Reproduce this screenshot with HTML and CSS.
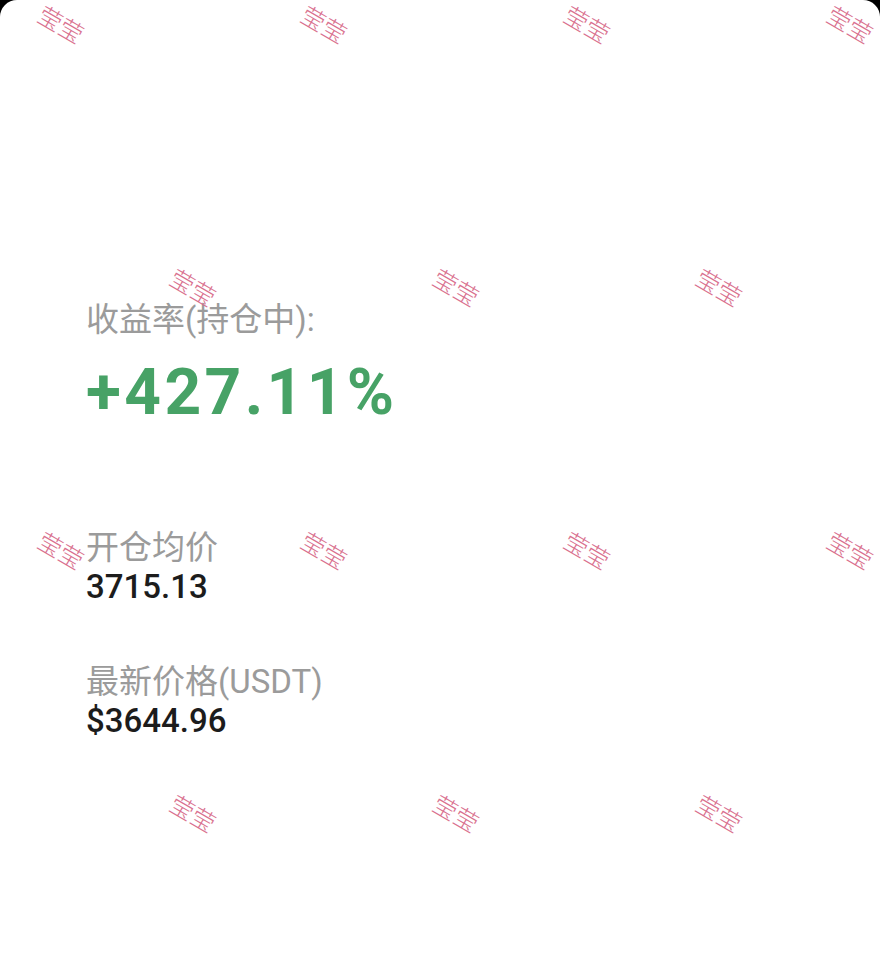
FILE: index.html
```html
<!doctype html>
<html lang="zh-CN">
  <head>
    <meta charset="UTF-8" />
    <meta name="viewport" content="width=device-width, initial-scale=1.0" />
    <title>收益率</title>
    <link rel="stylesheet" href="styles.css">
  </head>
  <body>
    <div class="card">
      <div class="content">
        <div class="label">收益率(持仓中):</div>
        <div class="profit">+427.11%</div>

        <div class="field field-first">
          <div class="label">开仓均价</div>
          <div class="value">3715.13</div>
        </div>

        <div class="field">
          <div class="label">最新价格(USDT)</div>
          <div class="value">$3644.96</div>
        </div>
      </div>

      <!-- watermark overlay -->
      <div class="watermark">
        <div class="wm-row wm-row-a">
          <span>莹莹</span><span>莹莹</span><span>莹莹</span><span>莹莹</span>
        </div>
        <div class="wm-row wm-row-b">
          <span>莹莹</span><span>莹莹</span><span>莹莹</span>
        </div>
        <div class="wm-row wm-row-a">
          <span>莹莹</span><span>莹莹</span><span>莹莹</span><span>莹莹</span>
        </div>
        <div class="wm-row wm-row-b">
          <span>莹莹</span><span>莹莹</span><span>莹莹</span>
        </div>
      </div>
    </div>
  </body>
</html>
```

FILE: styles.css
```css
* {
  margin: 0;
  padding: 0;
  box-sizing: border-box;
}

html,
body {
  height: 100%;
}

body {
  background: #000;
  font-family: Roboto, "Noto Sans CJK SC", sans-serif;
  overflow: hidden;
}

.card {
  position: relative;
  background: #fff;
  border-radius: 17px 17px 0 0;
  height: 973px;
  overflow: hidden;
}

.content {
  padding: 300px 0 0 86px;
}

.label {
  color: #9b9b9b;
  font-size: 33px;
  line-height: 40px;
}

.profit {
  color: #47a266;
  font-size: 64px;
  font-weight: 700;
  line-height: 72px;
  letter-spacing: 3.4px;
  margin-top: 17px;
}

.field {
  margin-top: 56px;
}

.field-first {
  margin-top: 99px;
}

.value {
  color: #1c1c1c;
  font-size: 33px;
  font-weight: 500;
  line-height: 38px;
}

.watermark {
  position: absolute;
  top: -108px;
  left: 0;
  right: 0;
  pointer-events: none;
  font-family: "Noto Sans CJK SC", sans-serif;
}

.wm-row {
  display: flex;
  height: 263px;
  align-items: center;
}

.wm-row-a {
  margin-left: -70px;
}

.wm-row-b {
  margin-left: 62px;
}

.wm-row span {
  flex: 0 0 263px;
  text-align: center;
  color: #d9708e;
  font-size: 24px;
  font-weight: 300;
  transform: rotate(30deg);
}
```
